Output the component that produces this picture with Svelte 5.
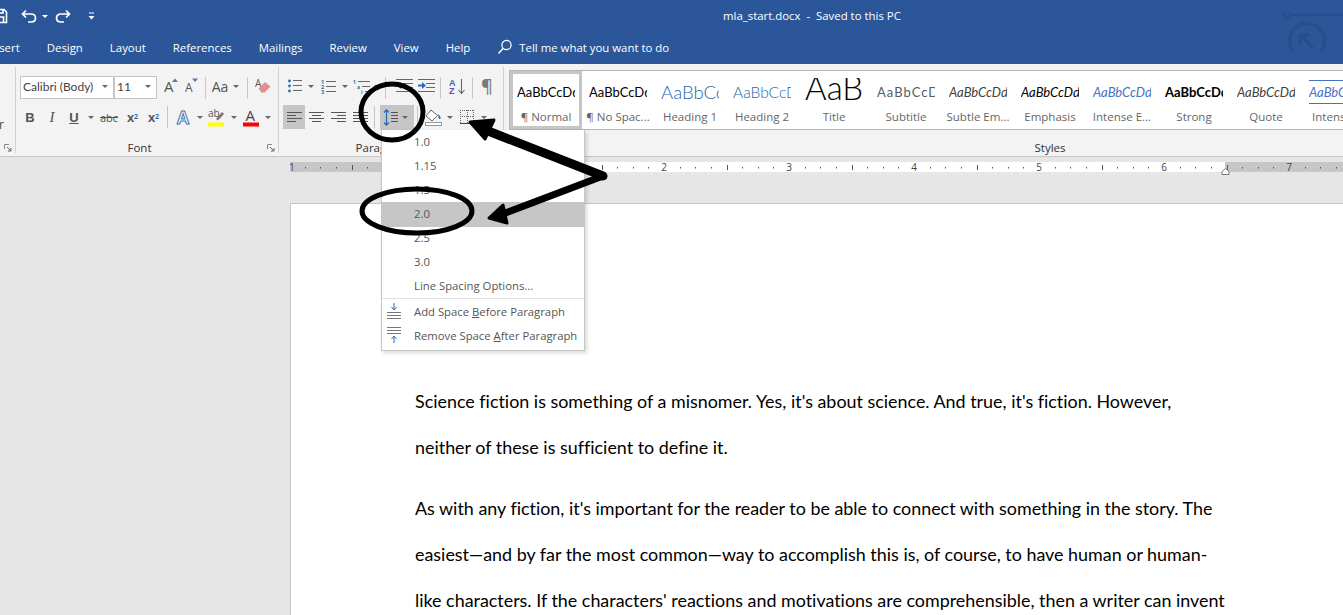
<script>
	const styles = [
		{ label: '¶ Normal', cls: 'normal', selected: true },
		{ label: '¶ No Spac...', cls: 'normal' },
		{ label: 'Heading 1', cls: 'h1' },
		{ label: 'Heading 2', cls: 'h2' },
		{ label: 'Title', cls: 'title', text: 'AaB' },
		{ label: 'Subtitle', cls: 'subtitle' },
		{ label: 'Subtle Em...', cls: 'subtle' },
		{ label: 'Emphasis', cls: 'emph' },
		{ label: 'Intense E...', cls: 'intense' },
		{ label: 'Strong', cls: 'strong' },
		{ label: 'Quote', cls: 'subtle' },
		{ label: 'Intense ...', cls: 'intenseq', text: 'AaBbCcDc' }
	];

	const spacing = ['1.0', '1.15', '1.5', '2.0', '2.5', '3.0'];
	const tabs = ['Insert', 'Design', 'Layout', 'References', 'Mailings', 'Review', 'View', 'Help'];

	// ruler ticks, one inch is 125px and zero sits at x=125 of the svg
	const ticks = [];
	for (let i = -7; i < 60; i++) {
		if (i % 8 !== 0) ticks.push({ x: Math.round(125 + i * 15.625) + 0.5, major: i % 4 === 0 });
	}
	const numbers = [2, 3, 4, 5, 6, 7];
</script>

<div class="shell">
	<header class="titlebar">
		<div class="toprow">
			<div class="qat">
				<svg class="save" width="8" height="16" viewBox="0 0 8 16"><path d="M-6 1.5H4L6.5 4V14.5H-6Z M-3 9H3.5V14.5H-3Z M-3 1.5H3V5H-3Z" fill="none" stroke="#fff" stroke-width="1.6"/></svg>
				<svg class="undo" width="16" height="14" viewBox="0 0 16 14"><path d="M5 1.5L1.5 5L5 8.5M1.5 5H10C13 5 14.5 7 14.5 9C14.5 11 13 13 10 13H7" fill="none" stroke="#fff" stroke-width="1.7"/></svg>
				<i class="caret white"></i>
				<svg class="redo" width="16" height="14" viewBox="0 0 16 14"><path d="M11 1.5L14.5 5L11 8.5M14.5 5H6C3 5 1.5 7 1.5 9C1.5 11 3 13 6 13H9" fill="none" stroke="#fff" stroke-width="1.7"/></svg>
				<svg class="custom" width="7" height="8" viewBox="0 0 7 8"><path d="M1 1H6" stroke="#fff" stroke-width="1"/><path d="M0.5 4H6.5L3.5 7.5Z" fill="#fff"/></svg>
			</div>
			<div class="doc-title">mla_start.docx&nbsp; -&nbsp; Saved to this PC</div>
		</div>
		<nav class="tabs">
			{#each tabs as t}
				<span class="tab">{t}</span>
			{/each}
			<span class="tell">
				<svg width="16" height="16" viewBox="0 0 16 16"><circle cx="9.5" cy="6" r="4.6" fill="none" stroke="#fff" stroke-width="1.2"/><path d="M6 9.5L1.5 14.5" stroke="#fff" stroke-width="1.4"/></svg>
				Tell me what you want to do
			</span>
		</nav>
		<svg class="watermark" width="60" height="40" viewBox="0 0 60 40"><circle cx="4" cy="3" r="3.2" fill="none" stroke="#25508a" stroke-width="2.4"/><path d="M7 3H60" stroke="#25508a" stroke-width="2.6"/><circle cx="24" cy="29" r="17.6" fill="none" stroke="#25508a" stroke-width="3.4"/><path d="M17 23V33M17 23H27M17 23L30 36" fill="none" stroke="#25508a" stroke-width="3.4"/></svg>
	</header>

	<section class="ribbon">
		<div class="group clip">
			<span class="cut">r</span>
			<svg class="launch" width="8" height="8" viewBox="0 0 8 8"><path d="M0.5 5V0.5H5" fill="none" stroke="#888"/><path d="M3 3L7 7M7 4V7H4" fill="none" stroke="#666"/></svg>
		</div>

		<div class="group font">
			<div class="row r1">
				<div class="combo name">Calibri (Body)<i class="caret"></i></div>
				<div class="combo size">11<i class="caret"></i></div>
				<span class="tool w21">
					<svg width="14" height="18" viewBox="0 0 14 18"><text x="0" y="15" class="icon-letter big">A</text><path d="M8 5L11 1.5L14 5Z" fill="#4a7ebb"/></svg>
				</span>
				<span class="tool w21">
					<svg width="13" height="18" viewBox="0 0 13 18"><text x="0" y="15" class="icon-letter mid">A</text><path d="M7 1.5H13L10 5Z" fill="#4a7ebb"/></svg>
				</span>
				<i class="sep"></i>
				<span class="tool w22 aa">Aa</span><span class="tool w10"><i class="caret"></i></span>
				<span class="tool w3"></span>
				<i class="sep"></i>
				<span class="tool w24">
					<svg width="16" height="16" viewBox="0 0 16 16"><text x="0" y="9" class="icon-letter tiny">A</text><path d="M4 10L10 4L15.5 8.5L9.5 14.5H7Z" fill="#ec8a94"/><path d="M4 10L7 14.5" stroke="#999"/></svg>
				</span>
			</div>
			<div class="row r2">
				<span class="tool w22"><b>B</b></span>
				<span class="tool w22"><em>I</em></span>
				<span class="tool w22 under">U</span>
				<span class="tool w11"><i class="caret"></i></span>
				<span class="tool w26 abc">abc</span>
				<span class="tool w21 script"><b>x</b><sub>2</sub></span>
				<span class="tool w21 script"><b>x</b><sup>2</sup></span>
				<i class="sep"></i>
				<span class="tool w2"></span>
				<span class="tool w22">
					<svg width="17" height="18" viewBox="0 0 17 18"><text x="0.5" y="15.5" class="effects">A</text></svg>
				</span>
				<span class="tool w9"><i class="caret"></i></span>
				<span class="tool w25">
					<svg width="17" height="19" viewBox="0 0 17 19"><text x="0" y="9" class="icon-letter tiny">ab</text><path d="M8 11L14 4L16 6L10 12.5Z" fill="#777"/><rect x="0" y="14.5" width="16" height="4" fill="#ffff00"/></svg>
				</span>
				<span class="tool w10"><i class="caret"></i></span>
				<span class="tool w24">
					<svg width="17" height="19" viewBox="0 0 17 19"><text x="2.5" y="13" class="icon-letter color">A</text><rect x="0" y="14.5" width="16" height="4" fill="#ff0000"/></svg>
				</span>
				<span class="tool w10"><i class="caret"></i></span>
			</div>
			<div class="group-label">Font</div>
			<svg class="launch" width="8" height="8" viewBox="0 0 8 8"><path d="M0.5 5V0.5H5" fill="none" stroke="#888"/><path d="M3 3L7 7M7 4V7H4" fill="none" stroke="#666"/></svg>
		</div>

		<div class="group para">
			<div class="row r1">
				<span class="tool w23">
					<svg width="14" height="14" viewBox="0 0 14 14"><g fill="#2b6cb5"><circle cx="1.5" cy="2" r="1.4"/><circle cx="1.5" cy="7" r="1.4"/><circle cx="1.5" cy="12" r="1.4"/></g><path d="M5 1.5H14M5 6.5H14M5 11.5H14" stroke="#666"/></svg>
				</span>
				<span class="tool w10"><i class="caret"></i></span>
				<span class="tool w24">
					<svg width="15" height="15" viewBox="0 0 15 15"><g fill="#2b6cb5" font-family="Open Sans" font-size="5.5" font-weight="700"><text x="0" y="5">1</text><text x="0" y="10">2</text><text x="0" y="15">3</text></g><path d="M5 2.5H15M5 7.5H15M5 12.5H15" stroke="#666"/></svg>
				</span>
				<span class="tool w10"><i class="caret"></i></span>
				<span class="tool w22">
					<svg width="17" height="15" viewBox="0 0 17 15"><g fill="#2b6cb5" font-family="Open Sans" font-size="5" font-weight="700"><text x="0" y="5">1</text><text x="4" y="10">a</text><text x="8" y="15">i</text></g><path d="M5 2.5H17M9 7.5H17M12 12.5H17" stroke="#666"/></svg>
				</span>
				<span class="tool w10"><i class="caret"></i></span>
				<i class="sep"></i>
				<span class="tool w4"></span>
				<span class="tool w22">
					<svg width="17" height="14" viewBox="0 0 17 14"><path d="M0 .5H17M7 4.5H17M7 8.5H17M0 12.5H17" stroke="#666"/><path d="M5 3L1 6.5L5 10Z" fill="#2b6cb5"/></svg>
				</span>
				<span class="tool w22">
					<svg width="17" height="14" viewBox="0 0 17 14"><path d="M0 .5H17M8 4.5H17M8 8.5H17M0 12.5H17" stroke="#666"/><path d="M0 6.5H6" stroke="#2b6cb5" stroke-width="2"/><path d="M4 3L8 6.5L4 10Z" fill="#2b6cb5"/></svg>
				</span>
				<i class="sep"></i>
				<span class="tool w25">
					<svg width="16" height="17" viewBox="0 0 16 17"><text x="0" y="8" class="az blue">A</text><text x="0" y="16" class="az purple">Z</text><path d="M12.5 1V15M9.5 12L12.5 15.5L15.5 12" fill="none" stroke="#666" stroke-width="1.1"/></svg>
				</span>
				<i class="sep"></i>
				<span class="tool w22 pilcrow">¶</span>
			</div>
			<div class="row r2">
				<span class="tool w22 on">
					<svg width="15" height="11" viewBox="0 0 15 11"><path d="M0 .5H15M0 3.5H9M0 6.5H15M0 9.5H9" stroke="#555"/></svg>
				</span>
				<span class="tool w22">
					<svg width="15" height="11" viewBox="0 0 15 11"><path d="M0 .5H15M3 3.5H12M0 6.5H15M3 9.5H12" stroke="#555"/></svg>
				</span>
				<span class="tool w22">
					<svg width="15" height="11" viewBox="0 0 15 11"><path d="M0 .5H15M6 3.5H15M0 6.5H15M6 9.5H15" stroke="#555"/></svg>
				</span>
				<span class="tool w22">
					<svg width="15" height="11" viewBox="0 0 15 11"><path d="M0 .5H15M0 3.5H15M0 6.5H15M0 9.5H15" stroke="#555"/></svg>
				</span>
				<i class="sep"></i>
				<span class="tool spacing on">
					<svg width="15" height="17" viewBox="0 0 15 17"><path d="M3.5 1V16M1 3.5L3.5 .8L6 3.5M1 13.5L3.5 16.2L6 13.5" fill="none" stroke="#2b6cb5" stroke-width="1.3"/><path d="M8 3.5H15M8 6.5H15M8 9.5H15M8 12.5H15" stroke="#555"/></svg>
					<i class="caret"></i>
				</span>
				<i class="sep"></i>
				<span class="tool w24">
					<svg width="19" height="17" viewBox="0 0 19 17"><path d="M7 1L13.5 6.5L8 12L2 7Z" fill="#fff" stroke="#666"/><path d="M14 5C16 7 17 8 16.5 9.5C16 10.5 14.5 10 14.5 8.5Z" fill="#2b6cb5"/><rect x="1.5" y="13.5" width="16" height="3" fill="#fff" stroke="#999"/></svg>
				</span>
				<span class="tool w10"><i class="caret"></i></span>
				<span class="tool w24">
					<svg width="14" height="14" viewBox="0 0 14 14"><path d="M0 .5H14M.5 0V13M13.5 0V13M7.5 0V13M0 6.5H14" fill="none" stroke="#666" stroke-dasharray="1 1"/><path d="M0 13.5H14" stroke="#444"/></svg>
				</span>
				<span class="tool w10"><i class="caret"></i></span>
			</div>
			<div class="group-label">Paragraph</div>
		</div>

		<div class="group gallery-wrap">
			<div class="gallery">
				{#each styles as s}
					<div class="style" class:selected={s.selected}>
						<div class="preview {s.cls}"><span>{s.text ?? 'AaBbCcDdEe'}</span></div>
						<div class="style-label">{s.label}</div>
					</div>
				{/each}
			</div>
			<div class="group-label">Styles</div>
		</div>
	</section>

	<main class="workspace">
		<div class="ruler">
			<svg width="1054" height="14" viewBox="0 0 1054 14">
				<rect x="1" y="0" width="125" height="10" fill="#c6c6c6"/>
				<rect x="125" y="0" width="811" height="10" fill="#fff"/>
				<rect x="936" y="0" width="118" height="10" fill="#c6c6c6"/>
				{#each ticks as t}
					{#if t.major}
						<path d="M{t.x} 3V8" stroke="#555"/>
					{:else}
						<path d="M{t.x} 5V6.5" stroke="#555"/>
					{/if}
				{/each}
				<text x="0" y="9" class="ruler-num">1</text>
				{#each numbers as n}
					<text x={125 + 125 * n} y="9" text-anchor="middle" class="ruler-num">{n}</text>
				{/each}
				<path d="M933 9.5L936.5 6.5L940 9.5V12.5H933Z" fill="#fff" stroke="#777"/>
			</svg>
		</div>
		<article class="page">
			<p>
				<span>Science fiction is something of a misnomer. Yes, it's about science. And true, it's fiction. However,</span>
				<span>neither of these is sufficient to define it.</span>
			</p>
			<p>
				<span>As with any fiction, it's important for the reader to be able to connect with something in the story. The</span>
				<span>easiest—and by far the most common—way to accomplish this is, of course, to have human or human-</span>
				<span>like characters. If the characters' reactions and motivations are comprehensible, then a writer can invent</span>
			</p>
		</article>
	</main>

	<div class="menu">
		{#each spacing as v}
			<div class="item" class:hot={v === '2.0'}>{v}</div>
		{/each}
		<div class="item">Line Spacing Options...</div>
		<div class="rule"></div>
		<div class="item">
			<svg width="14" height="16" viewBox="0 0 14 16"><path d="M7 0V6M4.5 4L7 7L9.5 4" fill="none" stroke="#2b6cb5"/><path d="M0 9.5H14M0 12.5H14M0 15.5H14" stroke="#777"/></svg>
			<span>Add Space <u>B</u>efore Paragraph</span>
		</div>
		<div class="item">
			<svg width="14" height="16" viewBox="0 0 14 16"><path d="M0 .5H14M0 3.5H14M0 6.5H14" stroke="#777"/><path d="M7 16V10M4.5 12L7 9L9.5 12" fill="none" stroke="#2b6cb5"/></svg>
			<span>Remove Space <u>A</u>fter Paragraph</span>
		</div>
	</div>

	<svg class="marks" width="1343" height="615" viewBox="0 0 1343 615">
		<ellipse cx="392" cy="112" rx="31" ry="28" fill="none" stroke="#000" stroke-width="5"/>
		<ellipse cx="417" cy="211" rx="55" ry="22" fill="none" stroke="#000" stroke-width="5"/>
		<path d="M483 129L603 176" fill="none" stroke="#000" stroke-width="9" stroke-linecap="round"/>
		<path d="M603 176L500 215" fill="none" stroke="#000" stroke-width="7" stroke-linecap="round"/>
		<path d="M470 122L494 120L485 139Z" fill="#000" stroke="#000" stroke-width="3" stroke-linejoin="round"/>
		<path d="M489 218L503 205L507 223Z" fill="#000" stroke="#000" stroke-width="3" stroke-linejoin="round"/>
	</svg>
</div>

<style>
	:global(body) {
		margin: 0;
		overflow: hidden;
	}

	.shell {
		position: relative;
		width: 1343px;
		height: 615px;
		overflow: hidden;
		background: #e6e6e6;
		font-family: "Open Sans", "Liberation Sans", sans-serif;
		color: #444;
	}

	.titlebar {
		position: relative;
		height: 64px;
		background: #2b579a;
		color: #fff;
		overflow: hidden;
	}

	.toprow {
		display: flex;
		align-items: center;
		height: 31px;
	}

	.qat {
		display: flex;
		align-items: center;
		width: 723px;
		flex: none;
		padding-top: 1px;
	}

	.save { margin-right: 13px; }
	.undo { margin-right: 5px; }
	.redo { margin-left: 7px; margin-right: 17px; }

	.doc-title {
		font-size: 11.4px;
		white-space: nowrap;
	}

	.tabs {
		display: flex;
		align-items: center;
		gap: 27px;
		height: 32px;
		margin-left: -11px;
		font-size: 11.4px;
	}

	.tab { white-space: nowrap; }

	.tell {
		display: flex;
		align-items: center;
		gap: 6px;
		white-space: nowrap;
	}

	.watermark {
		position: absolute;
		left: 1283px;
		top: 12px;
	}

	.ribbon {
		display: flex;
		height: 93px;
		background: #f3f3f3;
		border-bottom: 1px solid #c6c6c6;
		box-sizing: border-box;
	}

	.group {
		position: relative;
		flex: none;
		box-sizing: border-box;
		height: 92px;
	}

	.group::after {
		content: "";
		position: absolute;
		right: 0;
		top: 3px;
		bottom: 3px;
		width: 1px;
		background: #d2d2d2;
	}

	.clip { width: 16px; }
	.font { width: 263px; padding: 12px 0 0 3px; }
	.para { width: 225px; padding: 12px 0 0 4px; }

	.cut {
		position: absolute;
		left: -1px;
		top: 52px;
		font-size: 12px;
	}

	.launch {
		position: absolute;
		right: 4px;
		bottom: 4px;
	}

	.row {
		display: flex;
		align-items: center;
		height: 23px;
	}

	.r1 { margin-bottom: 6px; }
	.r1 .tool { margin-bottom: 3px; }
	.r2 { height: 24px; }

	.group-label {
		position: absolute;
		left: 0;
		right: 16px;
		top: 76px;
		text-align: center;
		font-size: 11.5px;
		color: #333;
	}

	.combo {
		display: flex;
		align-items: center;
		justify-content: space-between;
		box-sizing: border-box;
		height: 23px;
		padding: 0 5px 2px 2px;
		border: 1px solid #c6c6c6;
		background: #fff;
		font-size: 12px;
		font-family: "Lato", sans-serif;
		color: #444;
	}

	.name { width: 94px; margin-left: 1px; }
	.size { width: 43px; margin-right: 3px; }

	.tool {
		display: inline-flex;
		align-items: center;
		justify-content: center;
		flex: none;
		height: 24px;
		font-size: 13px;
		color: #555;
	}

	.w2 { width: 2px; }
	.w3 { width: 3px; }
	.w4 { width: 4px; }
	.w9 { width: 9px; }
	.w10 { width: 10px; }
	.w11 { width: 11px; }
	.w21 { width: 21px; }
	.w22 { width: 22px; }
	.w23 { width: 23px; }
	.w24 { width: 24px; }
	.w25 { width: 25px; }
	.w26 { width: 26px; }

	.tool b { font-family: "Liberation Sans", sans-serif; font-weight: 700; }
	.tool em { font-family: "Liberation Serif", serif; font-size: 15px; }
	.under { text-decoration: underline; font-family: "Liberation Sans", sans-serif; font-weight: 700; }
	.abc { font-size: 11px; text-decoration: line-through; }
	.aa { font-size: 14px; }
	.pilcrow { font-size: 18px; font-weight: 600; color: #7a7a7a; }

	.script sub, .script sup {
		font-size: 7px;
		font-weight: 700;
		color: #2b6cb5;
		line-height: 0;
	}

	.on { background: #c6c6c6; }
	.spacing {
		box-sizing: border-box;
		width: 34px;
		height: 25px;
		gap: 4px;
		margin-left: 2px;
		padding-left: 3px;
		justify-content: flex-start;
	}

	.sep {
		flex: none;
		width: 1px;
		height: 22px;
		margin: 0 3px;
		background: #c6c6c6;
	}

	.caret {
		display: inline-block;
		flex: none;
		width: 0;
		height: 0;
		border-left: 3px solid transparent;
		border-right: 3px solid transparent;
		border-top: 3px solid #666;
	}

	.caret.white { border-top-color: #fff; margin-right: 0; }

	.icon-letter {
		font-family: "Open Sans", sans-serif;
		fill: #555;
	}
	.big { font-size: 15px; }
	.mid { font-size: 12px; }
	.tiny { font-size: 10px; }
	.color { font-size: 15px; fill: #444; }
	.effects {
		font-family: "Liberation Sans", sans-serif;
		font-size: 18px;
		font-weight: 700;
		fill: #fff;
		stroke: #3f76b5;
		stroke-width: 1;
	}
	.az { font-family: "Liberation Sans", sans-serif; font-size: 9px; font-weight: 700; }
	.blue { fill: #2b6cb5; }
	.purple { fill: #7a3fb0; }

	.gallery-wrap { flex: 1; min-width: 0; }
	.gallery-wrap::after { display: none; }
	.gallery-wrap .group-label { right: auto; width: 1092px; }

	.gallery {
		display: flex;
		box-sizing: border-box;
		height: 60px;
		margin: 6px 0 0 5px;
		background: #fff;
		border: 1px solid #b5b5b5;
		border-right: 0;
		overflow: hidden;
	}

	.style {
		flex: none;
		box-sizing: border-box;
		width: 72px;
		height: 58px;
		padding: 3px 7px 0;
		text-align: center;
	}

	.style.selected {
		border: 3px solid #c6c6c6;
		padding: 0 4px;
	}

	.preview {
		height: 34px;
		line-height: 36px;
		overflow: hidden;
		white-space: nowrap;
		text-align: left;
		font-family: "Lato", sans-serif;
		font-size: 13px;
		color: #000;
	}

	.h1 { font-size: 18.5px; color: #1f66b0; font-weight: 300; }
	.h2 { font-size: 15.5px; color: #1f66b0; font-weight: 300; }
	.title {
		font-size: 33px;
		line-height: 26px;
		font-weight: 300;
		text-align: center;
		clip-path: inset(4px 0 0 0);
	}
	.subtitle { color: #5a5a5a; letter-spacing: 1px; }
	.subtle { font-style: italic; color: #404040; }
	.emph { font-style: italic; }
	.intense { font-style: italic; color: #4472c4; }
	.strong { font-weight: 700; }
	.intenseq { font-style: italic; color: #4472c4; }
	.intenseq span { border-top: 1px solid #4472c4; border-bottom: 1px solid #4472c4; padding: 3px 0; }

	.style-label {
		margin: 0 -7px;
		font-size: 11.5px;
		line-height: 18px;
		color: #666;
		white-space: nowrap;
	}

	.workspace {
		padding-top: 5px;
	}

	.ruler {
		height: 10px;
		margin: 0 0 31px 289px;
	}

	.ruler svg { display: block; overflow: visible; }

	.ruler-num {
		font-family: "Open Sans", sans-serif;
		font-size: 10px;
		fill: #444;
	}

	.page {
		box-sizing: border-box;
		width: 1060px;
		height: 420px;
		margin-left: 290px;
		padding: 174px 0 0 124px;
		background: #fff;
		border: 1px solid #c6c6c6;
		color: #000;
		font-family: "Lato", sans-serif;
		font-size: 17.9px;
		line-height: 46.3px;
		font-variant-ligatures: none;
	}

	.page p { margin: 0 0 14px; }
	.page span { display: block; white-space: nowrap; }

	.menu {
		position: absolute;
		left: 381px;
		top: 130px;
		width: 204px;
		box-sizing: border-box;
		padding: 0 0 2px;
		background: #fff;
		border: 1px solid #c6c6c6;
		border-top: 0;
		box-shadow: 2px 2px 4px rgba(0, 0, 0, 0.15);
		font-size: 11.3px;
		color: #555;
	}

	.item {
		display: flex;
		align-items: center;
		position: relative;
		box-sizing: border-box;
		height: 24px;
		padding: 0 0 1px 32px;
		white-space: nowrap;
	}

	.item svg {
		position: absolute;
		left: 5px;
		top: 3px;
	}

	.hot { background: #c6c6c6; height: 25px; margin-bottom: -1px; padding-bottom: 2px; }

	.rule {
		height: 1px;
		margin: 0 0 1px;
		background: #e2e2e2;
	}

	.marks {
		position: absolute;
		left: 0;
		top: 0;
		pointer-events: none;
	}
</style>
